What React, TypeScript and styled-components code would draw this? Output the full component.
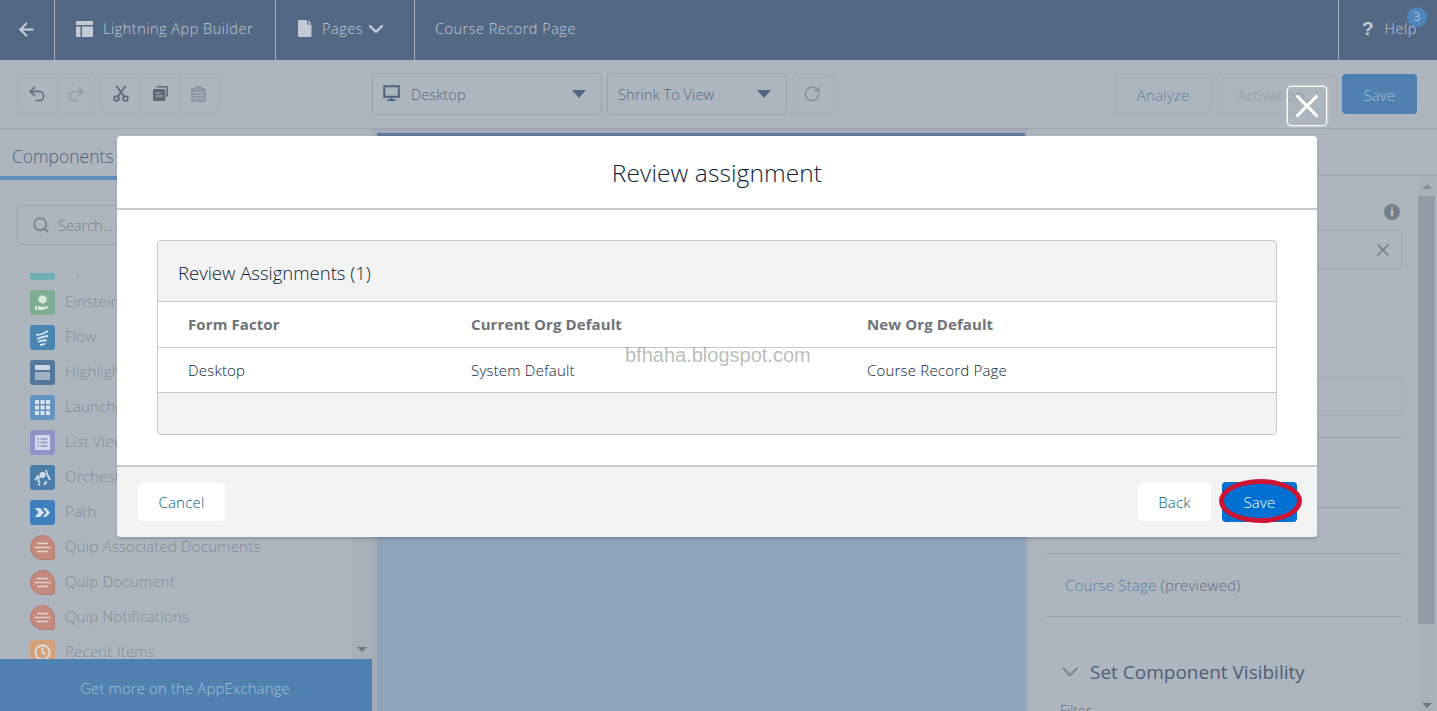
import styled, { createGlobalStyle } from 'styled-components';
import { ArrowLeft, ChevronDown, Clock, Redo2, RotateCw, Search, Undo2, X } from 'lucide-react';

const GlobalStyle = createGlobalStyle`
  html, body { margin: 0; padding: 0; }
  body { font-family: "Open Sans", Lato, "Liberation Sans", sans-serif; background: #adb5bf; }
  * { box-sizing: border-box; }
`

const tiles = [
  { name: 'Einstein Next Best Action', color: '#7fad92', kind: 'box' },
  { name: 'Flow', color: '#4b86b2', kind: 'flow' },
  { name: 'Highlights Panel', color: '#53789b', kind: 'panel' },
  { name: 'Launchpad', color: '#6593c0', kind: 'grid' },
  { name: 'List View', color: '#8e95c6', kind: 'list' },
  { name: 'Orchestrator Work Guide', color: '#4a7ea8', kind: 'orch' },
  { name: 'Path', color: '#3f7fbd', kind: 'path' },
  { name: 'Quip Associated Documents', color: '#c48a7e', kind: 'quip' },
  { name: 'Quip Document', color: '#c48a7e', kind: 'quip' },
  { name: 'Quip Notifications', color: '#c48a7e', kind: 'quip' },
  { name: 'Recent Items', color: '#d3a27d', kind: 'clock' },
]

function TileGlyph({ kind }: { kind: string }) {
  if (kind === 'clock') return <Clock size={17} color="#dfe3e8" strokeWidth={2.4} />
  if (kind === 'grid') {
    return (
      <svg width="25" height="25" viewBox="0 0 25 25" fill="#dbe4ee">
        <rect x="5" y="5" width="4" height="4" /><rect x="10.500" y="5" width="4" height="4" /><rect x="16" y="5" width="4" height="4" />
        <rect x="5" y="10.500" width="4" height="4" /><rect x="10.500" y="10.500" width="4" height="4" /><rect x="16" y="10.500" width="4" height="4" />
        <rect x="5" y="16" width="4" height="4" /><rect x="10.500" y="16" width="4" height="4" /><rect x="16" y="16" width="4" height="4" />
      </svg>
    )
  }
  if (kind === 'quip') {
    return (
      <svg width="23" height="23" viewBox="0 0 23 23">
        <path d="M6 7.500h11M3.500 11.500h16M6 15.500h11" stroke="#e0d3d0" strokeWidth="1.600" fill="none" />
      </svg>
    )
  }
  if (kind === 'panel') {
    return (
      <svg width="25" height="25" viewBox="0 0 25 25">
        <rect x="5" y="5" width="15" height="5" fill="#cdd6df" />
        <rect x="5" y="12" width="15" height="8" fill="#9fb1c3" />
      </svg>
    )
  }
  if (kind === 'list') {
    return (
      <svg width="25" height="25" viewBox="0 0 25 25">
        <rect x="5" y="5" width="15" height="15" rx="1" fill="#d5d8e8" />
        <path d="M7.500 9h1.500M10.500 9h7M7.500 12.500h1.500M10.500 12.500h7M7.500 16h1.500M10.500 16h7" stroke="#8e95c6" strokeWidth="1.600" />
      </svg>
    )
  }
  if (kind === 'path') {
    return (
      <svg width="25" height="25" viewBox="0 0 25 25">
        <path d="M5 8h5l4 4.500-4 4.500H5l3.500-4.500zM13 8h3l4 4.500-4 4.500h-3l3.500-4.500z" fill="#d6e2ee" />
      </svg>
    )
  }
  if (kind === 'flow') {
    return (
      <svg width="25" height="25" viewBox="0 0 25 25">
        <path d="M6 10c4 0 7-1 12-4M7 14c4-1 6-3 11-3M8 16.500c3 0 5-2 9-1M10 20c2 0 3-1 5-1" stroke="#d6e2ee" strokeWidth="1.800" fill="none" />
      </svg>
    )
  }
  if (kind === 'box') {
    return (
      <svg width="25" height="25" viewBox="0 0 25 25">
        <path d="M12.500 5l4 2.200v4.300l-4 2.200-4-2.200V7.200z" fill="#dbe6df" />
        <path d="M5 16h2v4H5zM8 16l4 .8h3l4-1-1 2-5 2.200H8z" fill="#dbe6df" />
      </svg>
    )
  }
  return (
    <svg width="25" height="25" viewBox="0 0 25 25">
      <circle cx="12.500" cy="10" r="3" fill="#d6e2ee" />
      <path d="M5 15l3-4 1 2-1 2 2 3M20 15l-3-6-1-4M14 20l2-3 1 1M8 19l2 1" stroke="#d6e2ee" strokeWidth="1.700" fill="none" />
    </svg>
  )
}

function App() {
  return (
    <Page>
      <GlobalStyle />

      <Header>
        <BackCell><ArrowLeft size={21} color="#c9d0da" strokeWidth={2.2} /></BackCell>
        <HeaderCell $width={221}>
          <svg width="19" height="18" viewBox="0 0 19 18">
            <path d="M1 1h17v4H1zM1 6.500h4.500V17H2a1 1 0 0 1-1-1zM7 6.500h11V16a1 1 0 0 1-1 1H7z" fill="#c3cad4" />
          </svg>
          <HeaderText>Lightning App Builder</HeaderText>
        </HeaderCell>
        <PagesCell $width={139}>
          <svg width="14" height="17" viewBox="0 0 14 17">
            <path d="M1 0h8v4.500h4.500V16a1 1 0 0 1-1 1H1a1 1 0 0 1-1-1V1a1 1 0 0 1 1-1zM10 0l3.500 3.500H10z" fill="#c3cad4" />
          </svg>
          <HeaderText>Pages</HeaderText>
          <ChevronDown size={24} color="#c9d0da" strokeWidth={2.2} />
        </PagesCell>
        <PageTitle>Course Record Page</PageTitle>
        <HelpCell>
          <HelpMark>?</HelpMark>
          <HeaderText>Help</HeaderText>
          <HelpBadge>3</HelpBadge>
        </HelpCell>
      </Header>

      <Toolbar>
        <IconGroup>
          <IconButton><Undo2 size={20} color="#6c7683" strokeWidth={2.2} /></IconButton>
          <IconButton><Redo2 size={20} color="#959eaa" strokeWidth={2.2} /></IconButton>
        </IconGroup>
        <IconGroup>
          <IconButton>
            <svg width="16" height="17" viewBox="0 0 16 17" fill="none" stroke="#5f6a78" strokeWidth="1.800">
              <circle cx="3.500" cy="13.500" r="2.400" />
              <circle cx="12.500" cy="13.500" r="2.400" />
              <path d="M5 11.500L12.500 1M11 11.500L3.500 1" />
            </svg>
          </IconButton>
          <IconButton>
            <svg width="15" height="15" viewBox="0 0 15 15">
              <path d="M3.500 0H14a1 1 0 0 1 1 1v9.500h-1.500V1.500h-10z" fill="#5f6a78" />
              <rect x="0" y="3" width="12.500" height="12" rx="1" fill="#5f6a78" />
              <path d="M2.500 7h5M2.500 10h7.500" stroke="#adb5bf" strokeWidth="1.200" />
            </svg>
          </IconButton>
          <IconButton>
            <svg width="15" height="16" viewBox="0 0 15 16">
              <rect x="0" y="2" width="15" height="14" rx="1.500" fill="#8f98a4" />
              <rect x="4" y="0" width="7" height="3.500" rx="1" fill="#8f98a4" />
              <path d="M2.500 6.500h10M2.500 9.500h10M2.500 12.500h10" stroke="#adb5bf" strokeWidth="1.100" />
            </svg>
          </IconButton>
        </IconGroup>
        <SelectBox $width={230} $left={153.5}>
          <svg width="17" height="17" viewBox="0 0 17 17">
            <path d="M1.200 1.200h14.600v10.600H1.200z" fill="none" stroke="#4d627d" strokeWidth="2" />
            <path d="M7.500 12h2v2.200h3V16h-8v-1.800h3z" fill="#4d627d" />
          </svg>
          <SelectText>Desktop</SelectText>
          <Caret />
        </SelectBox>
        <SelectBox $width={180} $left={5}>
          <SelectText>Shrink To View</SelectText>
          <Caret />
        </SelectBox>
        <IconGroup>
          <IconButton><RotateCw size={18} color="#86909c" strokeWidth={2.2} /></IconButton>
        </IconGroup>
        <ToolbarSpacer />
        <TextButton $width={96} $color="#547ea8">Analyze</TextButton>
        <TextButton $width={121} $color="#919aa6">Activation...</TextButton>
        <PrimaryButton>Save</PrimaryButton>
      </Toolbar>

      <Workspace>
        <LeftPanel>
          <TabStrip>
            <ActiveTab>Components</ActiveTab>
          </TabStrip>
          <SearchBox>
            <Search size={18} color="#7a8591" strokeWidth={2.4} />
            <span>Search...</span>
          </SearchBox>
          <ListArea>
            <ComponentList>
              <ComponentRow>
                <Tile $color="#6fb0b5" />
                <ClippedDescender />
              </ComponentRow>
              {tiles.map((t) => (
                <ComponentRow key={t.name}>
                  <Tile $color={t.color} $round={t.kind === 'quip'}><TileGlyph kind={t.kind} /></Tile>
                  <ComponentName>{t.name}</ComponentName>
                </ComponentRow>
              ))}
            </ComponentList>
            <ListScrollbar><ArrowDown /></ListScrollbar>
          </ListArea>
          <AppExchange>Get more on the AppExchange</AppExchange>
        </LeftPanel>

        <Canvas><CanvasStripe /><CanvasBody /></Canvas>

        <RightPanel>
          <RightTabs />
          <RightContent>
            <RightColumn>
              <InfoRow><InfoDot>i</InfoDot></InfoRow>
              <FieldBox><X size={20} color="#757f8b" strokeWidth={2} /></FieldBox>
              <FaintBand />
              <Rule $top={21} />
              <Rule $top={69} />
              <Rule $top={45} />
              <StageRow>
                <StageLink>Course Stage</StageLink> (previewed)
              </StageRow>
              <Rule $top={0} />
              <VisibilityHead>
                <ChevronDown size={26} color="#7c8692" strokeWidth={2} />
                <span>Set Component Visibility</span>
              </VisibilityHead>
              <FilterLabel>Filter</FilterLabel>
            </RightColumn>
            <RightScrollbar>
              <ArrowUp />
              <ScrollThumb />
              <ArrowDown />
            </RightScrollbar>
          </RightContent>
        </RightPanel>
      </Workspace>

      <CloseButton><X size={42} color="#ffffff" strokeWidth={2} /></CloseButton>

      <Modal>
        <ModalHeader>Review assignment</ModalHeader>
        <ModalBody>
          <Card>
            <CardHeader>Review Assignments (1)</CardHeader>
            <HeadRow>
              <ColOne>Form Factor</ColOne>
              <ColTwo>Current Org Default</ColTwo>
              <span>New Org Default</span>
            </HeadRow>
            <DataRow>
              <ColOne>Desktop</ColOne>
              <ColTwo>System Default</ColTwo>
              <span>Course Record Page</span>
            </DataRow>
            <CardFooter />
          </Card>
        </ModalBody>
        <ModalFooter>
          <NeutralButton $width={87}>Cancel</NeutralButton>
          <FooterSpacer />
          <NeutralButton $width={73}>Back</NeutralButton>
          <SaveWrap>
            <ModalSave>Save</ModalSave>
            <RedRing />
          </SaveWrap>
        </ModalFooter>
      </Modal>

      <Watermark>bfhaha.blogspot.com</Watermark>
    </Page>
  )
}

export default App

const Page = styled.div`
  position: relative;
  display: flex;
  flex-direction: column;
  width: 1437px;
  height: 711px;
  overflow: hidden;
  background: #adb5bf;
`

const Header = styled.header`
  display: flex;
  align-items: stretch;
  flex: none;
  height: 60px;
  background: #536885;
  color: #c3cad4;
`
const BackCell = styled.div`
  display: flex;
  align-items: center;
  justify-content: center;
  width: 55px;
  padding: 0 2px 2px 0;
  border-right: 1px solid #a9b2bf;
`
const HeaderCell = styled.div<{ $width: number }>`
  display: flex;
  align-items: center;
  gap: 9px;
  width: ${(p) => p.$width}px;
  padding: 0 0 3px 20px;
  border-right: 1px solid #a9b2bf;
`
const PagesCell = styled(HeaderCell)`
  gap: 1px;
  padding-left: 22px;

  span { margin-left: 9px; }
`
const HeaderText = styled.span`
  font-size: 14.500px;
  font-weight: 300;
  letter-spacing: 0.5px;
`
const PageTitle = styled(HeaderText)`
  flex: 1;
  align-self: center;
  padding: 0 0 3px 20px;
`
const HelpCell = styled.div`
  position: relative;
  display: flex;
  align-items: center;
  gap: 11px;
  width: 99px;
  padding: 0 0 3px 23px;
  border-left: 1px solid #a9b2bf;
`
const HelpMark = styled.span`
  font-family: "Liberation Sans", sans-serif;
  font-size: 19px;
  font-weight: 700;
  color: #c3cad4;
`
const HelpBadge = styled.span`
  position: absolute;
  top: 7px;
  left: 68px;
  width: 20px;
  height: 20px;
  border-radius: 50%;
  background: #4f86bb;
  color: #a9c4de;
  font-size: 12px;
  line-height: 20px;
  text-align: center;
`

const Toolbar = styled.div`
  display: flex;
  align-items: center;
  flex: none;
  height: 69px;
  padding: 0 20px 1px 17px;
  gap: 5px;
  background: #adb5bf;
  border-bottom: 1px solid #9ba4b0;
`
const IconGroup = styled.div`
  display: flex;
  height: 40px;
  border: 1px solid #a6aeb9;
  border-radius: 4px;
`
const IconButton = styled.div`
  display: flex;
  align-items: center;
  justify-content: center;
  width: 38.500px;
  & + & { border-left: 1px solid #a6aeb9; }
`
const SelectBox = styled.div<{ $width: number; $left: number }>`
  display: flex;
  align-items: center;
  gap: 11px;
  width: ${(p) => p.$width}px;
  height: 42px;
  margin-left: ${(p) => p.$left - 5}px;
  padding: 0 15px 0 10px;
  border: 1px solid #99a2ae;
  border-radius: 4px;
  color: #53667f;
`
const SelectText = styled.span`
  flex: 1;
  padding-top: 1px;
  font-size: 14.500px;
  font-weight: 300;
  letter-spacing: 0.1px;
`
const Caret = styled.span`
  width: 0;
  height: 0;
  border-left: 7px solid transparent;
  border-right: 7px solid transparent;
  border-top: 8px solid #4f6480;
`
const ToolbarSpacer = styled.div`
  flex: 1;
`
const TextButton = styled.div<{ $width: number; $color: string }>`
  display: flex;
  align-items: center;
  justify-content: center;
  width: ${(p) => p.$width}px;
  height: 40px;
  padding-top: 2px;
  border: 1px solid #a6aeb9;
  border-radius: 4px;
  color: ${(p) => p.$color};
  font-size: 15px;
  font-weight: 300;
  letter-spacing: 0.2px;
`
const PrimaryButton = styled.div`
  display: flex;
  align-items: center;
  justify-content: center;
  width: 75px;
  height: 40px;
  padding-top: 2px;
  border-radius: 4px;
  background: #4f81b0;
  color: #a8bfd6;
  font-size: 15px;
  font-weight: 300;
  letter-spacing: 0.2px;
`

const Workspace = styled.div`
  display: flex;
  flex: 1;
  min-height: 0;
`
const LeftPanel = styled.aside`
  display: flex;
  flex-direction: column;
  flex: none;
  width: 372px;
  background: #adb5bf;
`
const TabStrip = styled.div`
  flex: none;
  height: 51px;
`
const ActiveTab = styled.div`
  height: 51px;
  padding: 15px 0 0 12px;
  border-bottom: 4px solid #5e8fbd;
  color: #4d607a;
  font-size: 17.500px;
  font-weight: 300;
`
const SearchBox = styled.div`
  display: flex;
  align-items: center;
  flex: none;
  gap: 8px;
  width: 335px;
  height: 40px;
  margin: 25px 0 0 17px;
  padding-left: 14px;
  border: 1px solid #99a2ae;
  border-radius: 4px;
  color: #74808d;
  font-size: 14.500px;
  font-weight: 300;
`
const ListArea = styled.div`
  display: flex;
  flex: 1;
  min-height: 0;
  margin-top: 28px;
  overflow: hidden;
`
const ComponentList = styled.div`
  display: flex;
  flex-direction: column;
  flex: 1;
  gap: 10px;
  margin-top: -18px;
  padding-left: 30px;
`
const ComponentRow = styled.div`
  display: flex;
  align-items: center;
  flex: none;
  gap: 10px;
  height: 25px;
`
const Tile = styled.div<{ $color: string; $round?: boolean }>`
  display: flex;
  align-items: center;
  justify-content: center;
  width: 25px;
  height: 25px;
  border: ${(p) => (p.$round ? '1px solid #b37a6e' : 'none')};
  border-radius: ${(p) => (p.$round ? '50% 50% 3px 50%' : '3px')};
  background: ${(p) => p.$color};
`
const ClippedDescender = styled.span`
  width: 1px;
  height: 3px;
  margin: 13px 0 0 12px;
  background: #808a96;
`
const ComponentName = styled.span`
  margin-bottom: 4px;
  color: #808a96;
  font-size: 15px;
  font-weight: 300;
  line-height: 16px;
  letter-spacing: 0.2px;
`
const ListScrollbar = styled.div`
  display: flex;
  align-items: flex-end;
  justify-content: center;
  width: 20px;
  padding-bottom: 7px;
  background: #a7afb9;
`
const ArrowDown = styled.span`
  width: 0;
  height: 0;
  border-left: 5px solid transparent;
  border-right: 5px solid transparent;
  border-top: 5px solid #6d7682;
`
const ArrowUp = styled.span`
  width: 0;
  height: 0;
  border-left: 5px solid transparent;
  border-right: 5px solid transparent;
  border-bottom: 5px solid #848d99;
`
const AppExchange = styled.div`
  display: flex;
  align-items: center;
  justify-content: center;
  flex: none;
  height: 52px;
  padding: 5px 2px 0 0;
  background: #4f81b0;
  color: #a8bfd6;
  font-size: 15px;
  font-weight: 300;
  letter-spacing: 0.1px;
`

const Canvas = styled.main`
  display: flex;
  flex-direction: column;
  flex: none;
  width: 656px;
  padding: 4px 3px 0 5px;
  background: #a3abb6;
`
const CanvasStripe = styled.div`
  flex: none;
  height: 3px;
  background: #5f7c9c;
`
const CanvasBody = styled.div`
  flex: 1;
  background: #8fa3ba;
`

const RightPanel = styled.aside`
  display: flex;
  flex-direction: column;
  flex: 1;
  min-width: 0;
  background: #adb5bf;
`
const RightTabs = styled.div`
  flex: none;
  height: 47px;
  border-bottom: 1px solid #9ba4b0;
`
const RightContent = styled.div`
  display: flex;
  flex: 1;
  min-height: 0;
`
const RightColumn = styled.div`
  display: flex;
  flex-direction: column;
  flex: none;
  width: 390px;
  padding: 0 16px 0 17px;
  overflow: hidden;
`
const InfoRow = styled.div`
  display: flex;
  justify-content: flex-end;
  flex: none;
  height: 54px;
  padding: 28px 2px 0 0;
`
const InfoDot = styled.span`
  width: 16px;
  height: 16px;
  border-radius: 50%;
  background: #757f8b;
  color: #c5cad1;
  font-family: "Liberation Serif", serif;
  font-size: 12px;
  font-weight: 700;
  line-height: 16px;
  text-align: center;
`
const FieldBox = styled.div`
  display: flex;
  align-items: center;
  justify-content: flex-end;
  flex: none;
  height: 39px;
  padding-right: 8px;
  border: 1px solid #a0a9b4;
  border-radius: 4px;
`
const FaintBand = styled.div`
  flex: none;
  height: 39px;
  margin-top: 108px;
  border: 1px solid #a7afb9;
  border-radius: 4px;
`
const Rule = styled.div<{ $top: number }>`
  flex: none;
  height: 1px;
  margin-top: ${(p) => p.$top}px;
  background: #98a1ad;
`
const StageRow = styled.div`
  flex: none;
  height: 62px;
  padding: 21px 0 0 20px;
  color: #5e6a79;
  font-size: 15px;
  font-weight: 300;
  letter-spacing: 0.2px;
`
const StageLink = styled.span`
  color: #547ea8;
`
const VisibilityHead = styled.div`
  display: flex;
  align-items: center;
  flex: none;
  gap: 7px;
  margin-top: 42px;
  padding-left: 12px;
  color: #4d607a;
  font-size: 19px;
`
const FilterLabel = styled.div`
  flex: none;
  margin-top: 16px;
  padding-left: 15px;
  color: #5e6a79;
  font-size: 14px;
  font-weight: 300;
`
const RightScrollbar = styled.div`
  display: flex;
  flex-direction: column;
  align-items: center;
  flex: none;
  width: 17px;
  padding: 8px 0 3px;
  background: #a9b1bb;
`
const ScrollThumb = styled.div`
  flex: none;
  width: 100%;
  height: 428px;
  margin-top: 7px;
  margin-bottom: auto;
  background: #949ca8;
`

const CloseButton = styled.div`
  position: absolute;
  top: 86px;
  left: 1287px;
  display: flex;
  align-items: center;
  justify-content: center;
  width: 40px;
  height: 40px;
  border: 1px solid #ffffff;
  border-radius: 4px;
  box-shadow: 0 0 3px rgba(255, 255, 255, 0.8);
`

const Modal = styled.section`
  position: absolute;
  top: 136px;
  left: 117px;
  display: flex;
  flex-direction: column;
  width: 1200px;
  height: 401px;
  border-radius: 4px;
  background: #ffffff;
  box-shadow: 0 2px 3px rgba(0, 0, 0, 0.16);
  overflow: hidden;
`
const ModalHeader = styled.h2`
  flex: none;
  height: 74px;
  margin: 0;
  border-bottom: 2px solid #c9c9c9;
  color: #0b2239;
  font-size: 24.500px;
  font-weight: 300;
  line-height: 73px;
  letter-spacing: 0.1px;
  text-align: center;
`
const ModalBody = styled.div`
  flex: 1;
  padding: 30px 40px 0;
`
const Card = styled.div`
  height: 195px;
  border: 1px solid #c9c9c9;
  border-radius: 4px;
  background: #f3f3f3;
  overflow: hidden;
`
const CardHeader = styled.div`
  height: 61px;
  padding-left: 20px;
  border-bottom: 1px solid #c9c9c9;
  color: #0b2239;
  font-size: 18.500px;
  font-weight: 300;
  line-height: 64px;
`
const HeadRow = styled.div`
  display: flex;
  align-items: center;
  height: 46px;
  padding: 0 0 2px 30px;
  border-bottom: 1px solid #c9c9c9;
  background: #ffffff;
  color: #6e7378;
  font-size: 15px;
  font-weight: 700;
  letter-spacing: 0.1px;
`
const DataRow = styled(HeadRow)`
  height: 45px;
  padding-bottom: 0;
  color: #0b2239;
  font-weight: 300;
  letter-spacing: 0.2px;
`
const ColOne = styled.span`
  width: 283px;
`
const ColTwo = styled.span`
  width: 396px;
`
const CardFooter = styled.div`
  height: 41px;
`
const ModalFooter = styled.div`
  display: flex;
  align-items: center;
  flex: none;
  gap: 11px;
  height: 72px;
  padding: 0 20px 0 21px;
  border-top: 2px solid #c9c9c9;
  background: #f3f3f3;
`
const FooterSpacer = styled.div`
  flex: 1;
`
const NeutralButton = styled.div<{ $width: number }>`
  display: flex;
  align-items: center;
  justify-content: center;
  width: ${(p) => p.$width}px;
  height: 38px;
  border-radius: 4px;
  background: #ffffff;
  color: #005f80;
  font-size: 15px;
  font-weight: 300;
  letter-spacing: 0.2px;
`
const SaveWrap = styled.div`
  position: relative;
`
const ModalSave = styled.div`
  display: flex;
  align-items: center;
  justify-content: center;
  width: 75px;
  height: 40px;
  border-radius: 4px;
  background: #0070d2;
  color: #ffffff;
  font-size: 15px;
  font-weight: 300;
  letter-spacing: 0.2px;
`
const RedRing = styled.div`
  position: absolute;
  top: -3px;
  left: -3px;
  width: 83px;
  height: 44px;
  border: 5px solid #cf1433;
  border-radius: 50%;
`

const Watermark = styled.div`
  position: absolute;
  top: 344px;
  left: 625px;
  color: rgba(90, 90, 90, 0.42);
  font-family: "Liberation Sans", sans-serif;
  font-size: 20px;
  line-height: 22px;
  white-space: nowrap;
`
